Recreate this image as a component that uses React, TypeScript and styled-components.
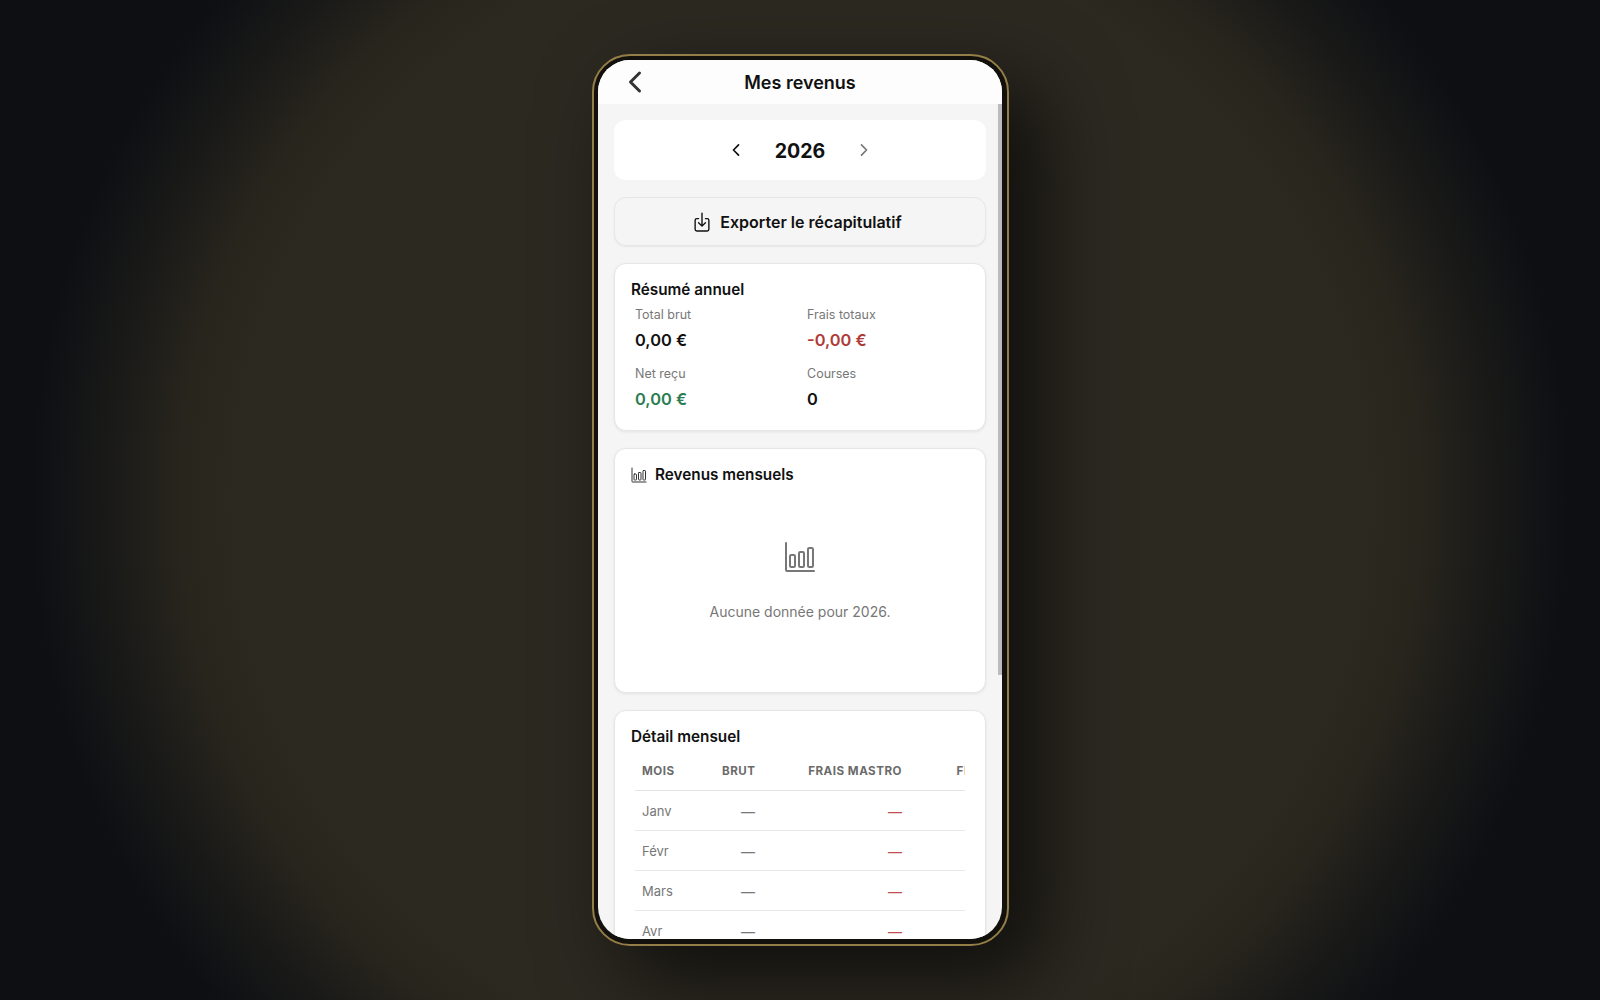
import React from "react";
import styled, { createGlobalStyle } from "styled-components";
import {
  IoBarChartOutline,
  IoChevronBack,
  IoChevronForward,
  IoDownloadOutline,
} from "react-icons/io5";

const GlobalStyle = createGlobalStyle`
  html, body {
    margin: 0;
    height: 100%;
    background: #0d0f13;
  }
  #root {
    height: 100%;
  }
  * {
    box-sizing: border-box;
  }
`;

const Stage = styled.div`
  height: 100vh;
  display: flex;
  align-items: center;
  justify-content: center;
  font-family: Inter, "Liberation Sans", sans-serif;
  background: radial-gradient(
    circle 780px at 50% 50%,
    #2c2921 0px,
    #2c2921 560px,
    #28251d 620px,
    #1a1a18 690px,
    #0d0f13 770px
  );
`;

const Phone = styled.div`
  width: 417px;
  height: 892px;
  margin-left: 1px;
  padding: 4px 5px 5px 4px;
  border: 2px solid #947e48;
  border-radius: 38px;
  background: #12110e;
  box-shadow: 32px 32px 82px rgba(0, 0, 0, 0.65);
`;

const Screen = styled.div`
  position: relative;
  height: 100%;
  display: flex;
  flex-direction: column;
  overflow: hidden;
  border-radius: 32px;
  background: #f5f5f5;
`;

const TopBar = styled.header`
  flex: none;
  height: 44px;
  display: grid;
  grid-template-columns: 74px 1fr 74px;
  align-items: center;
  background: #fdfdfd;
  color: #333;
`;

const BackButton = styled.span`
  display: flex;
  justify-content: center;
`;

const TopTitle = styled.h1`
  margin: 2px 0 0;
  text-align: center;
  font-size: 18px;
  line-height: 24px;
  font-weight: 600;
  color: #111;
`;

const Scroller = styled.main`
  flex: 1;
  min-height: 0;
  overflow: hidden;
  padding: 16px;
  display: flex;
  flex-direction: column;
  gap: 17px;
`;

const ScrollThumb = styled.div`
  position: absolute;
  top: 44px;
  right: 0;
  width: 4px;
  height: 571px;
  background: #bcbcbc;
`;

const YearCard = styled.section`
  flex: none;
  height: 60px;
  display: flex;
  align-items: center;
  justify-content: center;
  gap: 8px;
  border-radius: 12px;
  background: #fff;
`;

const YearArrow = styled.span<{ $muted?: boolean }>`
  width: 32px;
  display: flex;
  justify-content: center;
  color: ${(p) => (p.$muted ? "#777" : "#111")};
`;

const Year = styled.span`
  min-width: 80px;
  padding-top: 2px;
  text-align: center;
  font-size: 19.6px;
  font-weight: 700;
  color: #111;
`;

const ExportButton = styled.div`
  flex: none;
  height: 49px;
  padding: 1px 7px 0 0;
  display: flex;
  align-items: center;
  justify-content: center;
  gap: 7px;
  border: 1px solid #e6e6e6;
  border-radius: 12px;
  background: #f5f5f5;
  box-shadow: 0 1px 2px rgba(0, 0, 0, 0.06);
  font-size: 16px;
  font-weight: 600;
  color: #111;
`;

const Card = styled.section`
  flex: none;
  padding: 16px;
  border: 1px solid #e6e6e6;
  border-radius: 12px;
  background: #fff;
  box-shadow: 0 1px 3px rgba(0, 0, 0, 0.08);
`;

const SummaryCard = styled(Card)`
  padding-bottom: 15px;
`;

const CardTitle = styled.h2`
  margin: 0;
  display: flex;
  align-items: center;
  gap: 8px;
  font-size: 15.3px;
  line-height: 19px;
  font-weight: 600;
  color: #111;
`;

const StatGrid = styled.div`
  margin-top: 3px;
  display: grid;
  grid-template-columns: 1fr 1fr;
  gap: 5px 6px;
`;

const Stat = styled.div`
  padding: 4px;
  display: flex;
  flex-direction: column;
  gap: 4px;
`;

const StatLabel = styled.span`
  font-size: 12.5px;
  line-height: 18px;
  color: #777;
`;

const StatValue = styled.span<{ $tone?: string }>`
  font-size: 16.4px;
  line-height: 24px;
  font-weight: 600;
  color: ${(p) => p.$tone || "#111"};
`;

const Empty = styled.div`
  height: 192px;
  padding-top: 57px;
  display: flex;
  flex-direction: column;
  align-items: center;
  gap: 29px;
  color: #777;
`;

const EmptyText = styled.p`
  margin: 0;
  font-size: 14px;
  line-height: 20px;
  color: #777;
`;

const TableWrap = styled.div`
  margin: 5px 4px 0;
  overflow: hidden;
`;

const Table = styled.table`
  table-layout: fixed;
  width: 602px;
  border-collapse: separate;
  border-spacing: 0;
`;

const Th = styled.th<{ $left?: boolean }>`
  height: 40px;
  padding: 1px 7px 0;
  border-bottom: 1px solid #e4e4e4;
  text-align: ${(p) => (p.$left ? "left" : "right")};
  text-transform: uppercase;
  white-space: nowrap;
  font-size: 11.6px;
  font-weight: 700;
  letter-spacing: 0.5px;
  color: #6b6b6b;
`;

const Td = styled.td<{ $left?: boolean; $red?: boolean }>`
  height: 40px;
  padding: 1px 7px 0;
  border-bottom: 1px solid #e8e8e8;
  text-align: ${(p) => (p.$left ? "left" : "right")};
  white-space: nowrap;
  font-size: ${(p) => (p.$left ? "13px" : "14px")};
  color: ${(p) => (p.$red ? "#c0504d" : "#777")};
`;

const months = [
  "Janv",
  "Févr",
  "Mars",
  "Avr",
  "Mai",
  "Juin",
  "Juil",
  "Août",
  "Sept",
  "Oct",
  "Nov",
  "Déc",
];

const App = (): JSX.Element => {
  return (
    <Stage>
      <GlobalStyle />
      <Phone>
        <Screen>
          <TopBar>
            <BackButton>
              <IoChevronBack size={32} />
            </BackButton>
            <TopTitle>Mes revenus</TopTitle>
          </TopBar>
          <Scroller>
            <YearCard>
              <YearArrow>
                <IoChevronBack size={18} />
              </YearArrow>
              <Year>2026</Year>
              <YearArrow $muted>
                <IoChevronForward size={18} />
              </YearArrow>
            </YearCard>

            <ExportButton>
              <IoDownloadOutline size={22} />
              Exporter le récapitulatif
            </ExportButton>

            <SummaryCard>
              <CardTitle>Résumé annuel</CardTitle>
              <StatGrid>
                <Stat>
                  <StatLabel>Total brut</StatLabel>
                  <StatValue>0,00 €</StatValue>
                </Stat>
                <Stat>
                  <StatLabel>Frais totaux</StatLabel>
                  <StatValue $tone="#b03a3a">-0,00 €</StatValue>
                </Stat>
                <Stat>
                  <StatLabel>Net reçu</StatLabel>
                  <StatValue $tone="#2a7d4f">0,00 €</StatValue>
                </Stat>
                <Stat>
                  <StatLabel>Courses</StatLabel>
                  <StatValue>0</StatValue>
                </Stat>
              </StatGrid>
            </SummaryCard>

            <Card>
              <CardTitle>
                <IoBarChartOutline size={16} color="#333" />
                Revenus mensuels
              </CardTitle>
              <Empty>
                <IoBarChartOutline size={32} />
                <EmptyText>Aucune donnée pour 2026.</EmptyText>
              </Empty>
            </Card>

            <Card>
              <CardTitle>Détail mensuel</CardTitle>
              <TableWrap>
                <Table>
                  <colgroup>
                    <col width={80} />
                    <col width={47} />
                    <col width={147} />
                    <col width={138} />
                    <col width={90} />
                    <col width={100} />
                  </colgroup>
                  <thead>
                    <tr>
                      <Th $left>Mois</Th>
                      <Th>Brut</Th>
                      <Th>Frais Mastro</Th>
                      <Th>Frais Stripe</Th>
                      <Th>Net</Th>
                      <Th>Courses</Th>
                    </tr>
                  </thead>
                  <tbody>
                    {months.map((month) => (
                      <tr key={month}>
                        <Td $left>{month}</Td>
                        <Td>—</Td>
                        <Td $red>—</Td>
                        <Td $red>—</Td>
                        <Td>—</Td>
                        <Td>—</Td>
                      </tr>
                    ))}
                  </tbody>
                </Table>
              </TableWrap>
            </Card>
          </Scroller>
          <ScrollThumb />
        </Screen>
      </Phone>
    </Stage>
  );
};

export default App;
